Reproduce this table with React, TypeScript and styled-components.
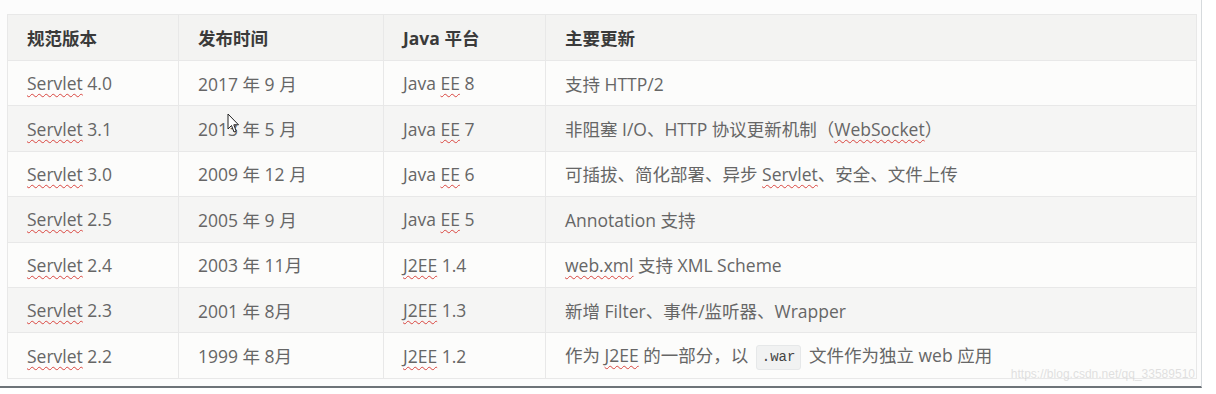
import React from "react";
import styled, { createGlobalStyle } from "styled-components";

const Global = createGlobalStyle`
  html, body { margin: 0; padding: 0; background: #ffffff; }
  #root { width: 1216px; height: 394px; overflow: hidden; }
`;

const Frame = styled.div`
  position: relative;
  box-sizing: border-box;
  width: 1202px;
  height: 388px;
  padding: 14px 5px 0 7px;
  background: #fcfcfc;
  border-right: 1px solid #d6dadd;
  border-bottom: 2px solid #6d7378;
`;

const Table = styled.table`
  width: 1189px;
  border-collapse: collapse;
  table-layout: fixed;
  font-family: "Open Sans", "Noto Sans CJK SC", sans-serif;
  font-size: 17.5px;
  border: 1px solid #e9e9e9;
`;

const HeadCell = styled.th<{ $w: number }>`
  width: ${(p) => p.$w}px;
  height: 46px;
  padding: 0 0 0 19px;
  text-align: left;
  font-weight: 700;
  color: #3a3a3a;
  background: #f3f3f2;
  border: 1px solid #e8e8e8;
  box-sizing: border-box;
`;

const Row = styled.tr<{ $alt: boolean }>`
  background: ${(p) => (p.$alt ? "#f5f5f4" : "#fcfcfb")};
`;

const Cell = styled.td`
  height: 45.4px;
  padding: 0 0 0 19px;
  color: #666666;
  border: 1px solid #e8e8e8;
  white-space: nowrap;
  box-sizing: border-box;
`;

const Spell = styled.span`
  text-decoration: underline wavy #d9453f;
  text-decoration-thickness: 1px;
  text-underline-offset: 3px;
  text-decoration-skip-ink: none;
`;

const Code = styled.code`
  display: inline-block;
  font-family: "Liberation Mono", "DejaVu Sans Mono", monospace;
  font-size: 14px;
  line-height: 17px;
  padding: 3px 5px;
  margin: 0 3px;
  color: #444;
  background: #f1f2f2;
  border: 1px solid #e6e8e9;
  border-radius: 3px;
  vertical-align: 1px;
`;

const Watermark = styled.div`
  position: absolute;
  right: 6px;
  top: 367px;
  font-family: "Liberation Sans", Arial, sans-serif;
  font-size: 12px;
  color: rgba(195, 195, 195, 0.5);
  pointer-events: none;
`;

const Cursor = styled.svg`
  position: absolute;
  left: 227px;
  top: 113px;
`;

type RowData = [React.ReactNode, React.ReactNode, React.ReactNode, React.ReactNode];

const S = (t: string) => <Spell>{t}</Spell>;

const rows: RowData[] = [
  [<>{S("Servlet")} 4.0</>, "2017 年 9 月", <>Java {S("EE")} 8</>, "支持 HTTP/2"],
  [<>{S("Servlet")} 3.1</>, "2013 年 5 月", <>Java {S("EE")} 7</>, <>非阻塞 I/O、HTTP 协议更新机制（{S("WebSocket")}）</>],
  [<>{S("Servlet")} 3.0</>, "2009 年 12 月", <>Java {S("EE")} 6</>, <>可插拔、简化部署、异步 {S("Servlet")}、安全、文件上传</>],
  [<>{S("Servlet")} 2.5</>, "2005 年 9 月", <>Java {S("EE")} 5</>, "Annotation 支持"],
  [<>{S("Servlet")} 2.4</>, "2003 年 11月", <>{S("J2EE")} 1.4</>, <>{S("web.xml")} 支持 XML Scheme</>],
  [<>{S("Servlet")} 2.3</>, "2001 年 8月", <>{S("J2EE")} 1.3</>, "新增 Filter、事件/监听器、Wrapper"],
  [<>{S("Servlet")} 2.2</>, "1999 年 8月", <>{S("J2EE")} 1.2</>, <>作为 {S("J2EE")} 的一部分，以 <Code>.war</Code> 文件作为独立 web 应用</>],
];

const cols: [string, number][] = [
  ["规范版本", 171],
  ["发布时间", 205],
  ["Java 平台", 162],
  ["主要更新", 651],
];

export default function App() {
  return (
    <>
      <Global />
      <Frame>
        <Table>
          <thead>
            <tr>
              {cols.map(([t, w]) => (
                <HeadCell key={t} $w={w}>{t}</HeadCell>
              ))}
            </tr>
          </thead>
          <tbody>
            {rows.map((r, i) => (
              <Row key={i} $alt={i % 2 === 1}>
                {r.map((c, j) => (
                  <Cell key={j}>{c}</Cell>
                ))}
              </Row>
            ))}
          </tbody>
        </Table>
        <Cursor width="13" height="21" viewBox="0 0 13 21">
          <path d="M1 1 L1 16 L4.5 12.5 L7 19 L9.2 18 L6.8 11.8 L11.5 11.8 Z" fill="#ffffff" stroke="#222" strokeWidth="1" strokeLinejoin="round" />
        </Cursor>
        <Watermark>https://blog.csdn.net/qq_33589510</Watermark>
      </Frame>
    </>
  );
}
